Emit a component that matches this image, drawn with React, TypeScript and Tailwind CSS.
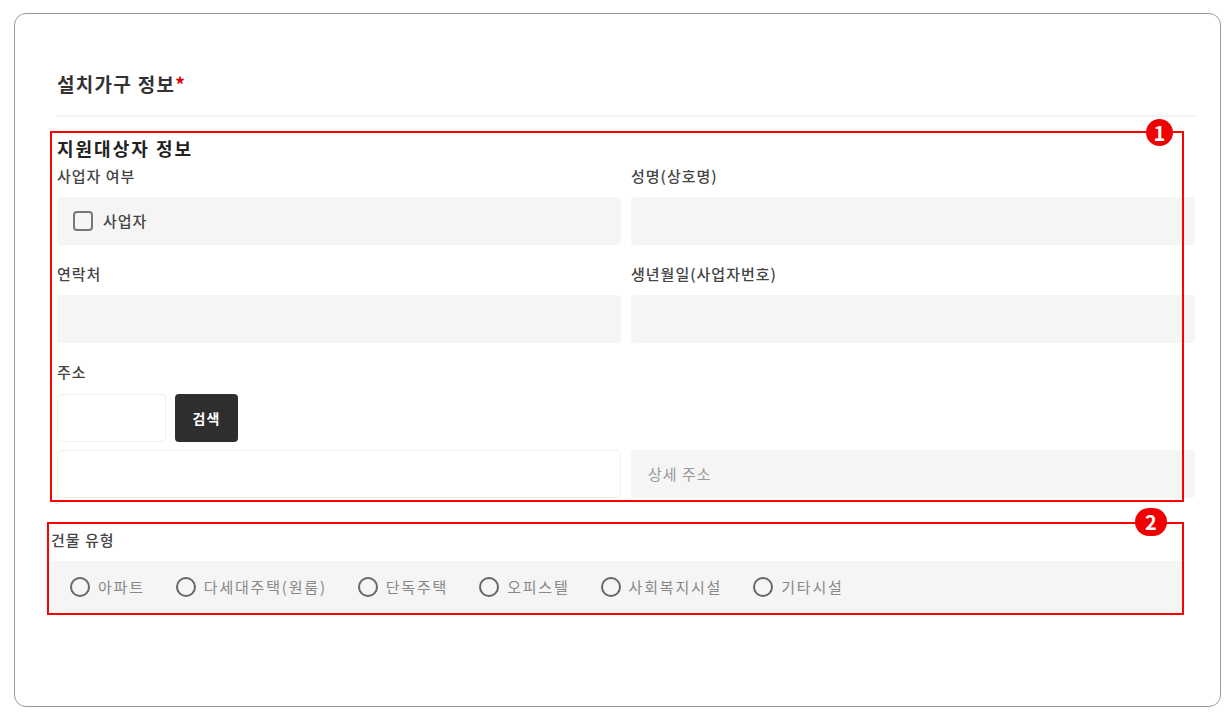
import React from 'react';

const font = { fontFamily: '"Noto Sans CJK KR", "Noto Sans", sans-serif' };

const buildingTypes = ['아파트', '다세대주택(원룸)', '단독주택', '오피스텔', '사회복지시설', '기타시설'];

function Label({ children }: { children: React.ReactNode }) {
  return <div className="h-[20px] text-[15px] font-medium leading-[20px] tracking-[1px] text-[#444]">{children}</div>;
}

function GrayInput({ placeholder }: { placeholder?: string }) {
  return (
    <div className="flex h-[48px] items-center rounded-[4px] bg-[#f5f5f5] px-[17px] text-[15px] tracking-[1px] text-[#999]">
      {placeholder}
    </div>
  );
}

function Badge({ n, className }: { n: string; className: string }) {
  return (
    <div
      className={`absolute flex items-center justify-center rounded-full bg-[#f00000] text-[20px] font-bold leading-none text-white ${className}`}
    >
      {n}
    </div>
  );
}

export default function App() {
  return (
    <div className="min-h-[727px] bg-white pt-[13px] pl-[14px]" style={font}>
      <div className="h-[694px] w-[1207px] rounded-[12px] border border-[#9a9a9a] pt-[58px] pr-[25px] pl-[42px]">
        {/* Title */}
        <h1 className="h-[24px] text-[19px] font-semibold leading-[24px] tracking-[1.3px] text-[#333]">
          설치가구 정보<span className="text-[#e00000]">*</span>
        </h1>
        <div className="mt-[19px] h-[2px] bg-[#f2f2f2]" />

        {/* Section 1 */}
        <section className="relative mt-[20px]">
          <h2 className="h-[22px] text-[18px] font-bold leading-[22px] tracking-[2px] text-[#222]">지원대상자 정보</h2>

          <div className="mt-[7px] grid grid-cols-2 gap-x-[10px]">
            <div>
              <Label>사업자 여부</Label>
              <div className="mt-[11px] flex h-[48px] items-center gap-[10px] rounded-[4px] bg-[#f5f5f5] pl-[16px]">
                <span className="h-[20px] w-[20px] rounded-[4px] border-2 border-[#777]" />
                <span className="text-[15px] font-medium tracking-[1px] text-[#444]">사업자</span>
              </div>
            </div>
            <div>
              <Label>성명(상호명)</Label>
              <div className="mt-[11px]">
                <GrayInput />
              </div>
            </div>
          </div>

          <div className="mt-[19px] grid grid-cols-2 gap-x-[10px]">
            <div>
              <Label>연락처</Label>
              <div className="mt-[11px]">
                <GrayInput />
              </div>
            </div>
            <div>
              <Label>생년월일(사업자번호)</Label>
              <div className="mt-[11px]">
                <GrayInput />
              </div>
            </div>
          </div>

          <div className="mt-[19px]">
            <Label>주소</Label>
            <div className="mt-[12px] flex gap-[9px]">
              <div className="h-[48px] w-[109px] rounded-[4px] border border-[#f0f0f0] bg-white" />
              <button className="h-[48px] w-[63px] rounded-[4px] bg-[#2e2e2e] text-[14px] font-bold tracking-[1px] text-white">
                검색
              </button>
            </div>
            <div className="mt-[8px] grid grid-cols-2 gap-x-[10px]">
              <div className="h-[48px] rounded-[4px] border border-[#f0f0f0] bg-white" />
              <GrayInput placeholder="상세 주소" />
            </div>
          </div>

          {/* annotation 1 */}
          <div className="pointer-events-none absolute -top-[6px] -bottom-[4px] -left-[7px] w-[1134px] border-2 border-[#ff0000]" />
          <Badge n="1" className="-top-[18px] left-[1089px] h-[27px] w-[27px]" />
        </section>

        {/* Section 2 */}
        <section className="relative mt-[32px] -ml-[6px] w-[1132px]">
          <Label>건물 유형</Label>
          <div className="mt-[11px] flex h-[51px] items-center gap-[31px] bg-[#f5f5f5] pl-[19px]">
            {buildingTypes.map((t) => (
              <label key={t} className="flex items-center gap-[8px]">
                <span className="h-[20px] w-[20px] rounded-full border-2 border-[#666]" />
                <span className="text-[15px] leading-[20px] tracking-[1.8px] text-[#888]">{t}</span>
              </label>
            ))}
          </div>

          {/* annotation 2 */}
          <div className="pointer-events-none absolute -top-[8px] -bottom-[3px] -left-[4px] w-[1137px] border-2 border-[#ff0000]" />
          <Badge n="2" className="-top-[22px] left-[1084px] h-[28px] w-[32px]" />
        </section>
      </div>
    </div>
  );
}
